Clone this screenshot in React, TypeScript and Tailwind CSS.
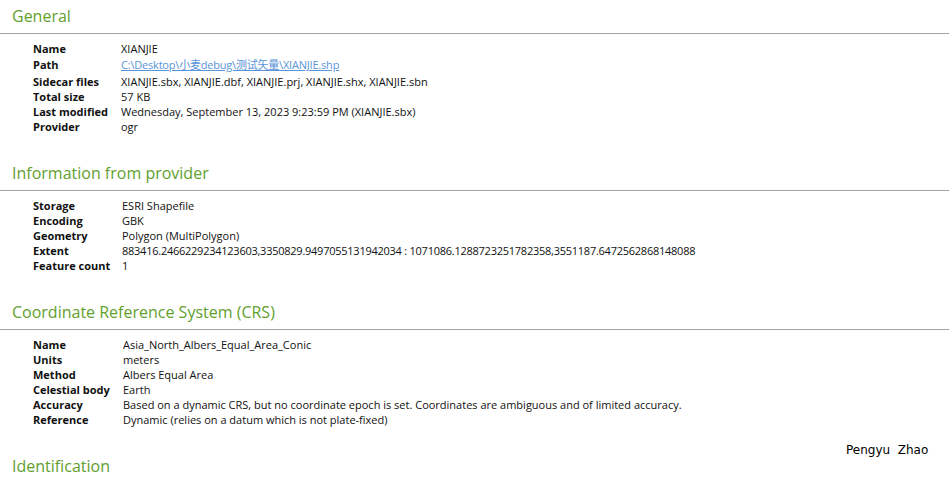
import React from 'react';

type Row = { label: string; value: React.ReactNode; h?: string };

const green = 'text-[#62a02e]';

const Section: React.FC<{ title: string; rows: Row[]; labelW: string; last?: boolean }> = ({ title, rows, labelW, last }) => (
  <section className={last ? '' : 'mb-[22px]'}>
    <h2 className={`pl-[12px] pt-[4px] pb-[5px] text-[16px] leading-[24px] font-normal ${green} border-b border-[#a3a3a3]`}>
      {title}
    </h2>
    {rows.length > 0 && (
      <div className="pl-[33px] pt-[8px]">
        {rows.map((r) => (
          <div key={r.label} className={`flex items-center ${r.h ?? 'h-[15px]'}`}>
            <div className={`${labelW} shrink-0 font-bold`}>{r.label}</div>
            <div className="whitespace-nowrap">{r.value}</div>
          </div>
        ))}
      </div>
    )}
  </section>
);

const App: React.FC = () => {
  const general: Row[] = [
    { label: 'Name', value: 'XIANJIE' },
    {
      label: 'Path',
      h: 'h-[17px]',
      value: (
        <a href="#" className="text-[#5a94d8] underline tracking-[-0.2px]">
          C:\Desktop\小麦debug\测试矢量\XIANJIE.shp
        </a>
      ),
    },
    { label: 'Sidecar files', h: 'h-[16px]', value: 'XIANJIE.sbx, XIANJIE.dbf, XIANJIE.prj, XIANJIE.shx, XIANJIE.sbn' },
    { label: 'Total size', value: '57 KB' },
    { label: 'Last modified', value: 'Wednesday, September 13, 2023 9:23:59 PM (XIANJIE.sbx)' },
    { label: 'Provider', value: 'ogr' },
  ];

  const provider: Row[] = [
    { label: 'Storage', value: 'ESRI Shapefile' },
    { label: 'Encoding', value: 'GBK' },
    { label: 'Geometry', value: 'Polygon (MultiPolygon)' },
    {
      label: 'Extent',
      value: (
        <span className="tracking-[-0.25px]">
          883416.2466229234123603,3350829.9497055131942034 : 1071086.1288723251782358,3551187.6472562868148088
        </span>
      ),
    },
    { label: 'Feature count', value: '1' },
  ];

  const crs: Row[] = [
    { label: 'Name', value: 'Asia_North_Albers_Equal_Area_Conic' },
    { label: 'Units', value: 'meters' },
    { label: 'Method', value: 'Albers Equal Area' },
    { label: 'Celestial body', value: 'Earth' },
    {
      label: 'Accuracy',
      value: 'Based on a dynamic CRS, but no coordinate epoch is set. Coordinates are ambiguous and of limited accuracy.',
    },
    { label: 'Reference', value: 'Dynamic (relies on a datum which is not plate-fixed)' },
  ];

  return (
    <div
      className="relative w-[949px] h-[477px] overflow-hidden bg-white text-[#111] text-[11px]"
      style={{ fontFamily: '"Open Sans", "Noto Sans CJK SC", sans-serif' }}
    >
      <Section title="General" rows={general} labelW="w-[88px]" />
      <Section title="Information from provider" rows={provider} labelW="w-[89px]" />
      <Section title="Coordinate Reference System (CRS)" rows={crs} labelW="w-[90px]" />
      <Section title="Identification" rows={[]} labelW="w-[90px]" last />

      {/* watermark */}
      <div
        className="absolute left-[846px] top-[442px] text-[12px] leading-[16px] text-black whitespace-pre"
        style={{ fontFamily: '"DejaVu Sans", "Noto Sans CJK KR", sans-serif' }}
      >
        Pengyu  Zhao
      </div>
    </div>
  );
};

export default App;
